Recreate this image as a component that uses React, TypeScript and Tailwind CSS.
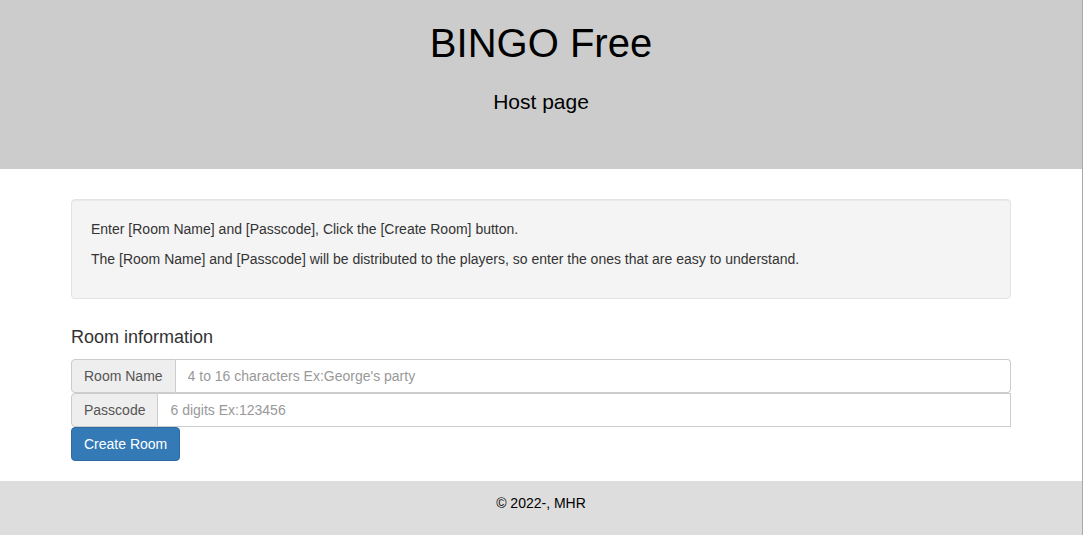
export default function App() {
  return (
    <div className="min-h-[535px] w-full border-r border-[#a9a9a9] bg-white font-['Liberation_Sans',Arial,sans-serif] text-sm leading-5 text-[#333]">
      {/* Header */}
      <header className="h-[169px] bg-[#cccccc] pt-[19px] text-center text-black">
        <h1 className="text-[40px] leading-[48px]">BINGO Free</h1>
        <p className="mt-[23px] text-[21px] leading-6">Host page</p>
      </header>

      {/* Main */}
      <main className="mx-auto w-[940px] pt-[30px]">
        <div className="rounded border border-[#e3e3e3] bg-[#f4f4f4] px-[19px] py-[19px] shadow-[inset_0_1px_1px_rgba(0,0,0,0.05)]">
          <p className="mb-[10px]">
            Enter [Room Name] and [Passcode], Click the [Create Room] button.
          </p>
          <p className="mb-[10px]">
            The [Room Name] and [Passcode] will be distributed to the players, so enter the ones that are easy to understand.
          </p>
        </div>

        <h4 className="mt-[28px] mb-[12px] text-lg leading-5 text-[#333]">Room information</h4>

        <div className="flex h-[34px]">
          <span className="flex items-center rounded-l border border-[#ccc] bg-[#eeeeee] px-3 text-[#555]">
            Room Name
          </span>
          <input
            className="flex-1 rounded-r border border-l-0 border-[#ccc] px-3 text-[#555] placeholder:text-[#999] outline-none"
            placeholder="4 to 16 characters Ex:George's party"
          />
        </div>
        <div className="flex h-[34px]">
          <span className="flex items-center rounded-l border border-[#ccc] bg-[#eeeeee] px-3 text-[#555]">
            Passcode
          </span>
          <input
            className="flex-1 border border-l-0 border-[#ccc] px-3 text-[#555] placeholder:text-[#999] outline-none"
            placeholder="6 digits Ex:123456"
          />
        </div>
        <button className="h-[34px] rounded border border-[#2e6da4] bg-[#337ab7] px-3 text-white">
          Create Room
        </button>
      </main>

      {/* Footer */}
      <footer className="mt-5 h-[54px] bg-[#dddddd] pt-3 text-center text-black">
        © 2022-, MHR
      </footer>
    </div>
  );
}
